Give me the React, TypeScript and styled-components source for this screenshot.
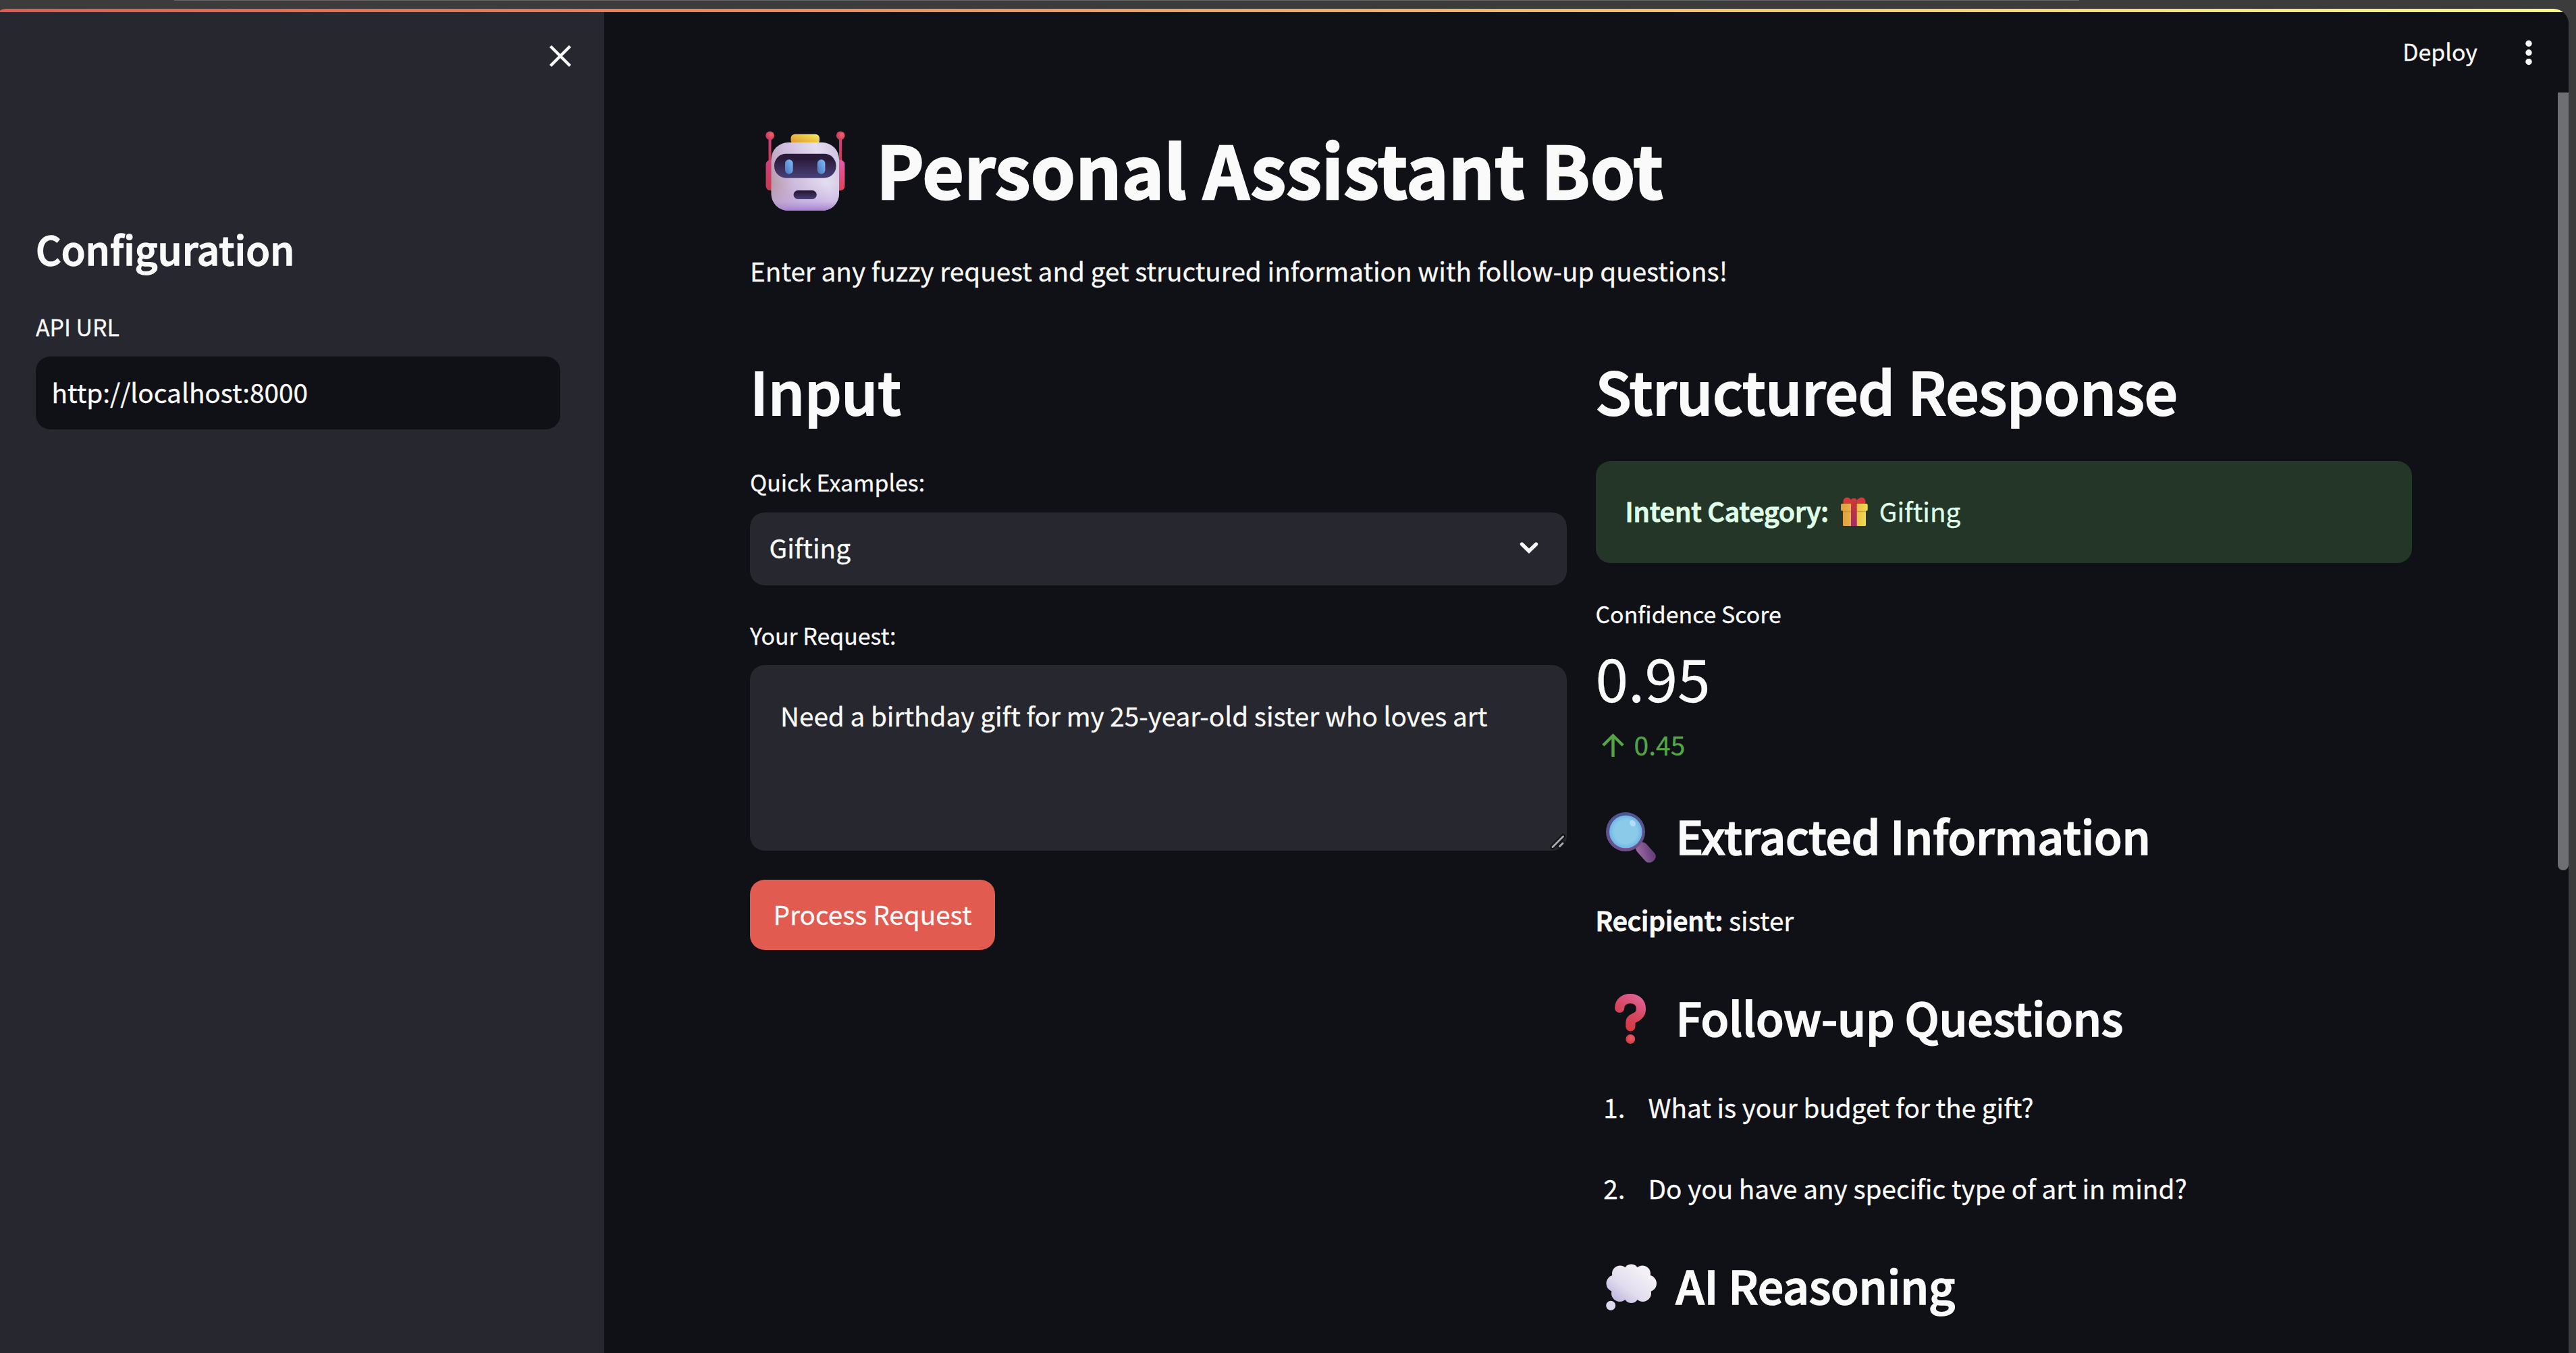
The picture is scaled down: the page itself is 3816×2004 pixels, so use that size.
import React from "react";
import styled, { createGlobalStyle } from "styled-components";

const colors = {
  chrome: "#3c3c3c",
  page: "#0f1116",
  panel: "#26272f",
  text: "#fafafa",
  primary: "#e15b50",
  success: "#233628",
  successText: "#dffde9",
  up: "#54a645",
};

const GlobalStyle = createGlobalStyle`
  *, *::before, *::after { box-sizing: border-box; }
  html, body { margin: 0; background: ${colors.chrome}; }
  body {
    color: ${colors.text};
    font-family: "Noto Sans CJK SC", "Noto Sans", sans-serif;
    font-size: 38.7px;
    -webkit-text-stroke: 0.3px currentColor;
    overflow: hidden;
  }
  h1, h2, h3, p, ol { margin: 0; padding: 0; }
`;

const Window = styled.div`
  width: 3816px;
  height: 2004px;
  padding: 13px 11px 0 0;
  background: ${colors.chrome};
  display: flex;
`;

const TabEdge = styled.div`
  position: absolute;
  top: 0;
  left: 258px;
  width: 2822px;
  height: 1px;
  background: #666666;
`;

const Shell = styled.div`
  flex: 1;
  display: flex;
  flex-direction: column;
  overflow: hidden;
  background: ${colors.page};
  border-radius: 10px 22px 0 0 / 3px 22px 0 0;
`;

const Decoration = styled.div`
  flex: none;
  height: 5px;
  background: linear-gradient(90deg, #e15b50, #fbf984);
`;

const Body = styled.div`
  flex: 1;
  min-height: 0;
  display: flex;
`;

const Sidebar = styled.aside`
  flex: none;
  width: 895px;
  padding: 0 65px 0 53px;
  background: ${colors.panel};
`;

const SidebarHeader = styled.div`
  height: 315px;
  padding-top: 43px;
  margin-right: -22px;
  display: flex;
  justify-content: flex-end;
  align-items: flex-start;
`;

const Main = styled.main`
  flex: 1;
  position: relative;
  min-width: 0;
  padding: 0 232px 0 216px;
  overflow: hidden;
`;

const Toolbar = styled.div`
  height: 160px;
  padding-top: 32px;
  margin-right: -195px;
  display: flex;
  justify-content: flex-end;
  align-items: flex-start;
  gap: 54px;
`;

const DeployButton = styled.span`
  padding-top: 1px;
  font-size: 33.9px;
  line-height: 50px;
`;

const Scrollbar = styled.div`
  position: absolute;
  top: 119px;
  right: 0;
  width: 16px;
  height: 1152px;
  border-radius: 0 0 8px 8px;
  background: #6e6f73;
`;

const Title = styled.h1`
  display: flex;
  align-items: flex-start;
  gap: 46px;
  padding-left: 23px;
  font-size: 106.5px;
  font-weight: 700;
  -webkit-text-stroke: 2.4px ${colors.text};
  line-height: 142px;
  white-space: nowrap;
  svg { margin-top: 16px; flex: none; }
`;

const Paragraph = styled.p<{ $top: number }>`
  margin-top: ${(p) => p.$top}px;
  line-height: 66px;
  white-space: nowrap;
`;

const Columns = styled.div`
  margin-top: 86px;
  display: grid;
  grid-template-columns: 1fr 1fr;
  gap: 43px;
`;

const Column = styled.section`
  display: flex;
  flex-direction: column;
  align-items: stretch;
`;

const SectionTitle = styled.h2`
  font-size: 87.2px;
  font-weight: 500;
  -webkit-text-stroke: 2.2px ${colors.text};
  line-height: 117px;
  letter-spacing: -0.3px;
  white-space: nowrap;
`;

const SubTitle = styled.h3<{ $top: number }>`
  display: flex;
  margin-top: ${(p) => p.$top}px;
  font-size: 67.9px;
  font-weight: 500;
  -webkit-text-stroke: 1.7px ${colors.text};
  line-height: 90px;
  letter-spacing: -0.25px;
  white-space: nowrap;
`;

const EmojiSlot = styled.span<{ $left: number; $top: number }>`
  width: 119px;
  flex: none;
  padding: ${(p) => p.$top}px 0 0 ${(p) => p.$left}px;
  line-height: 0;
`;

const SidebarTitle = styled.h2`
  font-size: 58.3px;
  font-weight: 500;
  -webkit-text-stroke: 1.5px ${colors.text};
  line-height: 70px;
`;

const Label = styled.div<{ $top: number; $bottom: number }>`
  margin: ${(p) => p.$top}px 0 ${(p) => p.$bottom}px;
  font-size: 33.9px;
  line-height: 50px;
`;

const Field = styled.div<{ $bg: string; $left: number }>`
  display: flex;
  align-items: center;
  justify-content: space-between;
  height: 108px;
  padding: 0 41px 4px ${(p) => p.$left}px;
  border-radius: 21.6px;
  background: ${(p) => p.$bg};
`;

const SelectedValue = styled.span`
  margin-top: -2px;
`;

const TextArea = styled.div`
  position: relative;
  height: 275px;
  padding: 44px 45px;
  border-radius: 21.6px;
  background: ${colors.panel};
  line-height: 60px;
  white-space: nowrap;
`;

const Grip = styled.svg`
  position: absolute;
  right: 0;
  bottom: 0;
`;

const PrimaryButton = styled.button`
  align-self: flex-start;
  width: 363px;
  height: 104px;
  margin-top: 43px;
  padding: 0 0 5px;
  border: 0;
  border-radius: 21.6px;
  background: ${colors.primary};
  color: ${colors.text};
  font: inherit;
  white-space: nowrap;
`;

const Alert = styled.div`
  display: flex;
  height: 151px;
  margin-top: 47px;
  padding: 40px 44px;
  border-radius: 21.6px;
  background: ${colors.success};
  color: ${colors.successText};
  line-height: 66px;
  svg { margin: 13px 17px 0 18px; flex: none; }
`;

const Strong = styled.strong`
  font-weight: 500;
  font-size: 39.1px;
  -webkit-text-stroke: 1.2px currentColor;
`;

const MetricValue = styled.div`
  margin-top: 18px;
  font-size: 87.6px;
  line-height: 100px;
`;

const MetricDelta = styled.div`
  display: flex;
  align-items: flex-start;
  gap: 10px;
  margin-top: 20px;
  padding-left: 4px;
  color: ${colors.up};
  font-size: 39px;
  line-height: 60px;
  svg { margin-top: 10px; }
`;

const Questions = styled.ol`
  list-style: none;
`;

const Question = styled.li`
  display: flex;
  gap: 34px;
  margin-top: 54.5px;
  line-height: 66px;
  white-space: nowrap;
`;

const Marker = styled.span`
  width: 44px;
  text-align: right;
`;

const CloseIcon = () => (
  <svg width="44" height="44" viewBox="0 0 44 44" fill="none" stroke={colors.text} strokeWidth="4.4">
    <path d="M7.5 7.5 36.5 36.5M36.5 7.5 7.5 36.5" />
  </svg>
);

const KebabIcon = () => (
  <svg width="44" height="56" viewBox="0 0 44 56" fill={colors.text}>
    <circle cx="22" cy="14.5" r="4.7" />
    <circle cx="22" cy="28" r="4.7" />
    <circle cx="22" cy="41.5" r="4.7" />
  </svg>
);

const ChevronIcon = () => (
  <svg width="30" height="20" viewBox="0 0 30 20" fill="none" stroke={colors.text} strokeWidth="5.4" strokeLinecap="round">
    <path d="M4.5 5 15 15.2 25.5 5" />
  </svg>
);

const ArrowIcon = () => (
  <svg width="43" height="43" viewBox="0 0 43 43" fill="none" stroke={colors.up} strokeWidth="4.4">
    <path d="M21.5 39V7.5M6.8 22 21.5 7.5 36.2 22" />
  </svg>
);

const RobotEmoji = () => (
  <svg width="118" height="119" viewBox="0 0 118 119">
    <defs>
      <linearGradient id="rb-head" x1="0" y1="0.6" x2="1" y2="0.3">
        <stop offset="0" stopColor="#b79aa8" />
        <stop offset="0.3" stopColor="#cdbbdc" />
        <stop offset="0.75" stopColor="#e4ddf0" />
        <stop offset="1" stopColor="#d3c8e4" />
      </linearGradient>
      <linearGradient id="rb-chin" x1="0" y1="0" x2="0" y2="1">
        <stop offset="0.6" stopColor="#c8b4e2" stopOpacity="0" />
        <stop offset="0.86" stopColor="#c3aae2" stopOpacity="0.6" />
        <stop offset="1" stopColor="#a47fd0" />
      </linearGradient>
      <linearGradient id="rb-cap" x1="0" y1="1" x2="1" y2="0">
        <stop offset="0" stopColor="#d58f36" />
        <stop offset="0.6" stopColor="#eec643" />
        <stop offset="1" stopColor="#f8ec70" />
      </linearGradient>
      <linearGradient id="rb-visor" x1="0" y1="0" x2="0" y2="1">
        <stop offset="0.2" stopColor="#2b1b3b" />
        <stop offset="1" stopColor="#484078" />
      </linearGradient>
      <linearGradient id="rb-eye" x1="0" y1="1" x2="1" y2="0">
        <stop offset="0" stopColor="#4a74bd" />
        <stop offset="1" stopColor="#7cc0fb" />
      </linearGradient>
      <linearGradient id="rb-red" x1="0" y1="0" x2="0" y2="1">
        <stop offset="0" stopColor="#cf3f80" />
        <stop offset="1" stopColor="#c93a4c" />
      </linearGradient>
      <linearGradient id="rb-ear" x1="0" y1="0" x2="0" y2="1">
        <stop offset="0" stopColor="#e45aae" />
        <stop offset="1" stopColor="#e04357" />
      </linearGradient>
      <radialGradient id="rb-ball" cx="0.65" cy="0.4" r="0.6">
        <stop offset="0" stopColor="#f0606c" />
        <stop offset="1" stopColor="#cf3a5e" />
      </radialGradient>
    </defs>
    <rect x="4.5" y="10" width="4" height="36" fill="url(#rb-red)" />
    <rect x="109" y="10" width="4" height="36" fill="url(#rb-red)" />
    <rect x="0.5" y="42.7" width="18" height="45.6" rx="7" fill="url(#rb-red)" />
    <rect x="99" y="42.7" width="18.4" height="45.6" rx="7" fill="url(#rb-ear)" />
    <circle cx="6.6" cy="6.8" r="6.4" fill="url(#rb-ball)" />
    <circle cx="111.2" cy="6.8" r="6.4" fill="url(#rb-ball)" />
    <rect x="37.5" y="4.7" width="42.5" height="15" rx="6" fill="url(#rb-cap)" />
    <rect x="8.5" y="17" width="100.5" height="101" rx="25" fill="url(#rb-head)" />
    <rect x="8.5" y="17" width="100.5" height="101" rx="25" fill="url(#rb-chin)" />
    <rect x="13" y="33.7" width="91.5" height="36" rx="17.5" fill="url(#rb-visor)" />
    <rect x="29" y="42.2" width="11.6" height="21.6" rx="5.8" fill="url(#rb-eye)" />
    <rect x="76.8" y="42.2" width="11.6" height="21.6" rx="5.8" fill="url(#rb-eye)" />
    <rect x="41.5" y="88" width="34.3" height="13" rx="6.5" fill="url(#rb-visor)" />
  </svg>
);

const GiftEmoji = () => (
  <svg width="40" height="44" viewBox="0 0 40 44">
    <defs>
      <linearGradient id="gf-box" x1="0" y1="0" x2="1" y2="0">
        <stop offset="0" stopColor="#e39c45" />
        <stop offset="0.55" stopColor="#e9bd48" />
        <stop offset="1" stopColor="#f1dd4e" />
      </linearGradient>
      <linearGradient id="gf-ribbon" x1="0" y1="0" x2="0" y2="1">
        <stop offset="0" stopColor="#cf3a3a" />
        <stop offset="0.5" stopColor="#b8353f" />
        <stop offset="1" stopColor="#a02c6c" />
      </linearGradient>
    </defs>
    <path d="M15.5 10.5H4C2.4 7 4 1 9 .8c3 0 5 2 7 4.2zM23.5 10.5H36C37.5 7 36 1 31 .8c-3 0-5.5 2-7.5 4.2z" fill="#d6383b" />
    <rect x="3" y="18" width="34" height="25" rx="1.6" fill="url(#gf-box)" />
    <rect x="3" y="20" width="34" height="2.4" fill="#bd8433" opacity="0.6" />
    <rect x="0" y="10" width="39.7" height="10.7" rx="2" fill="url(#gf-box)" />
    <path d="M15 43V5.5C15 3 17 2 19.3 2s4.400 1 4.400 3.500V43z" fill="url(#gf-ribbon)" />
  </svg>
);

const MagnifierEmoji = () => (
  <svg width="75" height="76" viewBox="0 0 75 76">
    <defs>
      <linearGradient id="mg-ring" x1="0" y1="0" x2="0" y2="1">
        <stop offset="0" stopColor="#4b5590" />
        <stop offset="1" stopColor="#71508c" />
      </linearGradient>
      <radialGradient id="mg-glass">
        <stop offset="0.7" stopColor="#8bcbe9" />
        <stop offset="1" stopColor="#6fb6e6" />
      </radialGradient>
      <linearGradient id="mg-handle" x1="1" y1="0" x2="0" y2="1">
        <stop offset="0.2" stopColor="#68407c" />
        <stop offset="0.8" stopColor="#94659c" />
      </linearGradient>
    </defs>
    <rect x="42" y="50.5" width="34" height="18" rx="8" transform="rotate(48 59 59.5)" fill="url(#mg-handle)" />
    <circle cx="29" cy="29" r="29" fill="url(#mg-ring)" />
    <circle cx="29.3" cy="29" r="24.3" fill="url(#mg-glass)" />
    <ellipse cx="39.5" cy="16.5" rx="4" ry="5" transform="rotate(-35 39.5 16.5)" fill="#b9dcf4" />
  </svg>
);

const QuestionEmoji = () => (
  <svg width="47" height="75" viewBox="0 0 47 75">
    <defs>
      <linearGradient id="qm-body" gradientUnits="userSpaceOnUse" x1="10" y1="48" x2="38" y2="4">
        <stop offset="0" stopColor="#d43840" />
        <stop offset="0.5" stopColor="#d64862" />
        <stop offset="1" stopColor="#df6398" />
      </linearGradient>
      <radialGradient id="qm-dot" cx="0.6" cy="0.4">
        <stop offset="0" stopColor="#ec5f66" />
        <stop offset="1" stopColor="#d83e48" />
      </radialGradient>
    </defs>
    <path
      d="M7.2 21C7.2 12 14 7.2 23 7.2s16 5.5 16 15c0 8-4.5 11-10 13.5-4 1.8-5.6 3-5.6 6.5v6.3"
      fill="none"
      stroke="url(#qm-body)"
      strokeWidth="14.2"
      strokeLinecap="round"
    />
    <circle cx="23.3" cy="67" r="6.9" fill="url(#qm-dot)" />
  </svg>
);

const ThoughtEmoji = () => (
  <svg width="76" height="70" viewBox="0 0 76 70">
    <defs>
      <linearGradient id="th-cloud" gradientUnits="userSpaceOnUse" x1="12" y1="58" x2="50" y2="8">
        <stop offset="0" stopColor="#b9b0dc" />
        <stop offset="0.45" stopColor="#e1dcee" />
        <stop offset="1" stopColor="#f3f0f6" />
      </linearGradient>
    </defs>
    <g fill="url(#th-cloud)">
      <ellipse cx="37.5" cy="29" rx="28" ry="22" />
      <circle cx="21" cy="14.5" r="12" />
      <circle cx="37.5" cy="11.5" r="11" />
      <circle cx="54" cy="14.5" r="12" />
      <circle cx="13" cy="29" r="12.5" />
      <circle cx="62.5" cy="29" r="12.5" />
      <circle cx="20.5" cy="43.5" r="12.5" />
      <circle cx="37.5" cy="47" r="11" />
      <circle cx="54.5" cy="43.5" r="12.5" />
    </g>
    <circle cx="7.2" cy="61.8" r="7" fill="#dcd8ef" />
  </svg>
);

export default function App() {
  return (
    <>
      <GlobalStyle />
      <Window>
        <TabEdge />
        <Shell>
          <Decoration />
          <Body>
            <Sidebar>
              <SidebarHeader>
                <CloseIcon />
              </SidebarHeader>
              <SidebarTitle>Configuration</SidebarTitle>
              <Label $top={56} $bottom={19}>API URL</Label>
              <Field $bg={colors.page} $left={23.5}>http://localhost:8000</Field>
            </Sidebar>
            <Main>
              <Toolbar>
                <DeployButton>Deploy</DeployButton>
                <KebabIcon />
              </Toolbar>
              <Title>
                <RobotEmoji />
                Personal Assistant Bot
              </Title>
              <Paragraph $top={47}>
                Enter any fuzzy request and get structured information with follow-up questions!
              </Paragraph>
              <Columns>
                <Column>
                  <SectionTitle>Input</SectionTitle>
                  <Label $top={53} $bottom={20}>Quick Examples:</Label>
                  <Field $bg={colors.panel} $left={28.5}>
                    <SelectedValue>Gifting</SelectedValue>
                    <ChevronIcon />
                  </Field>
                  <Label $top={49} $bottom={19}>Your Request:</Label>
                  <TextArea>
                    Need a birthday gift for my 25-year-old sister who loves art
                    <Grip width="28" height="28" viewBox="0 0 28 28" strokeLinecap="round">
                      <path d="M7 22.5 22.5 7M17.5 21.5 22 17" stroke="#111217" strokeWidth="7" />
                      <path d="M7 22.5 22.5 7M17.5 21.5 22 17" stroke="#a8a8aa" strokeWidth="3" />
                    </Grip>
                  </TextArea>
                  <PrimaryButton>Process Request</PrimaryButton>
                </Column>
                <Column>
                  <SectionTitle>Structured Response</SectionTitle>
                  <Alert>
                    <Strong>Intent Category:</Strong>
                    <GiftEmoji />
                    <span>Gifting</span>
                  </Alert>
                  <Label $top={50} $bottom={0}>Confidence Score</Label>
                  <MetricValue>0.95</MetricValue>
                  <MetricDelta>
                    <ArrowIcon />
                    0.45
                  </MetricDelta>
                  <SubTitle $top={60}>
                    <EmojiSlot $left={15} $top={11}><MagnifierEmoji /></EmojiSlot>
                    Extracted Information
                  </SubTitle>
                  <Paragraph $top={46.5}>
                    <Strong>Recipient:</Strong> sister
                  </Paragraph>
                  <SubTitle $top={66.5}>
                    <EmojiSlot $left={28} $top={11}><QuestionEmoji /></EmojiSlot>
                    Follow-up Questions
                  </SubTitle>
                  <Questions>
                    <Question>
                      <Marker>1.</Marker>
                      What is your budget for the gift?
                    </Question>
                    <Question>
                      <Marker>2.</Marker>
                      Do you have any specific type of art in mind?
                    </Question>
                  </Questions>
                  <SubTitle $top={65.5}>
                    <EmojiSlot $left={15} $top={14}><ThoughtEmoji /></EmojiSlot>
                    AI Reasoning
                  </SubTitle>
                </Column>
              </Columns>
              <Scrollbar />
            </Main>
          </Body>
        </Shell>
      </Window>
    </>
  );
}
